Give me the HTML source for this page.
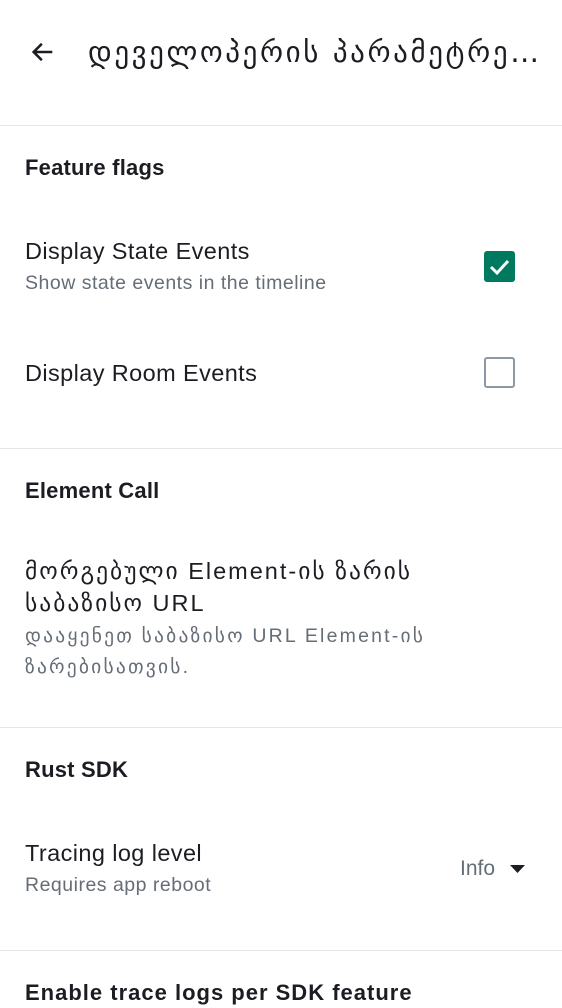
<!DOCTYPE html>
<html><head><meta charset="utf-8"><style>
*{margin:0;padding:0;box-sizing:border-box}
body{width:562px;height:1000px;overflow:hidden;background:#fff;position:relative;font-family:"Liberation Sans","DejaVu Sans",sans-serif;color:#1b1d22}
.t{position:absolute;left:25px;white-space:nowrap}
.h{font-size:22px;font-weight:bold;line-height:30px;letter-spacing:0.2px}
.p{font-size:23.5px;line-height:32px;letter-spacing:0.4px}
.s{font-size:19.5px;line-height:31px;color:#656d77;letter-spacing:0.5px}
.d{position:absolute;left:0;width:562px;height:1px;background:#e3e6ea}
</style></head><body>
<svg style="position:absolute;left:29px;top:38px" width="28" height="28" viewBox="0 0 24 24"><path d="M20 12H5M11 5l-7 7 7 7" fill="none" stroke="#1b1d22" stroke-width="2.2"/></svg>
<div class="t" style="left:88px;top:33px;font-size:29px;line-height:38px;letter-spacing:2.6px;font-family:'DejaVu Sans',sans-serif">დეველოპერის პარამეტრე…</div>
<div class="d" style="top:125px"></div>
<div class="t h" style="top:153px">Feature flags</div>
<div class="t p" style="top:235px">Display State Events</div>
<div class="t s" style="top:268px">Show state events in the timeline</div>
<div style="position:absolute;left:484px;top:251px;width:31px;height:31px;background:#007a5e;border-radius:3px"></div>
<svg style="position:absolute;left:484px;top:251px" width="31" height="31" viewBox="0 0 31 31"><path d="M7 16l6 6 11-12" fill="none" stroke="#fff" stroke-width="3"/></svg>
<div class="t p" style="top:357px">Display Room Events</div>
<div style="position:absolute;left:484px;top:357px;width:31px;height:31px;border:2.5px solid #8d97a5;border-radius:3px"></div>
<div class="d" style="top:448px"></div>
<div class="t h" style="top:476px">Element Call</div>
<div class="t p" style="top:555px;letter-spacing:2px">მორგებული Element-ის ზარის<br>საბაზისო URL</div>
<div class="t s" style="top:621px;letter-spacing:2.2px">დააყენეთ საბაზისო URL Element-ის<br>ზარებისათვის.</div>
<div class="d" style="top:727px"></div>
<div class="t h" style="top:755px">Rust SDK</div>
<div class="t p" style="top:837px">Tracing log level</div>
<div class="t s" style="top:870px">Requires app reboot</div>
<div class="t" style="left:460px;top:855px;font-size:21px;line-height:28px;color:#656d77">Info</div>
<svg style="position:absolute;left:510px;top:864px" width="16" height="10"><path d="M0 1h15L7.5 9z" fill="#1b1d22"/></svg>
<div class="d" style="top:950px"></div>
<div class="t h" style="top:978px;letter-spacing:1px">Enable trace logs per SDK feature</div>
</body></html>
